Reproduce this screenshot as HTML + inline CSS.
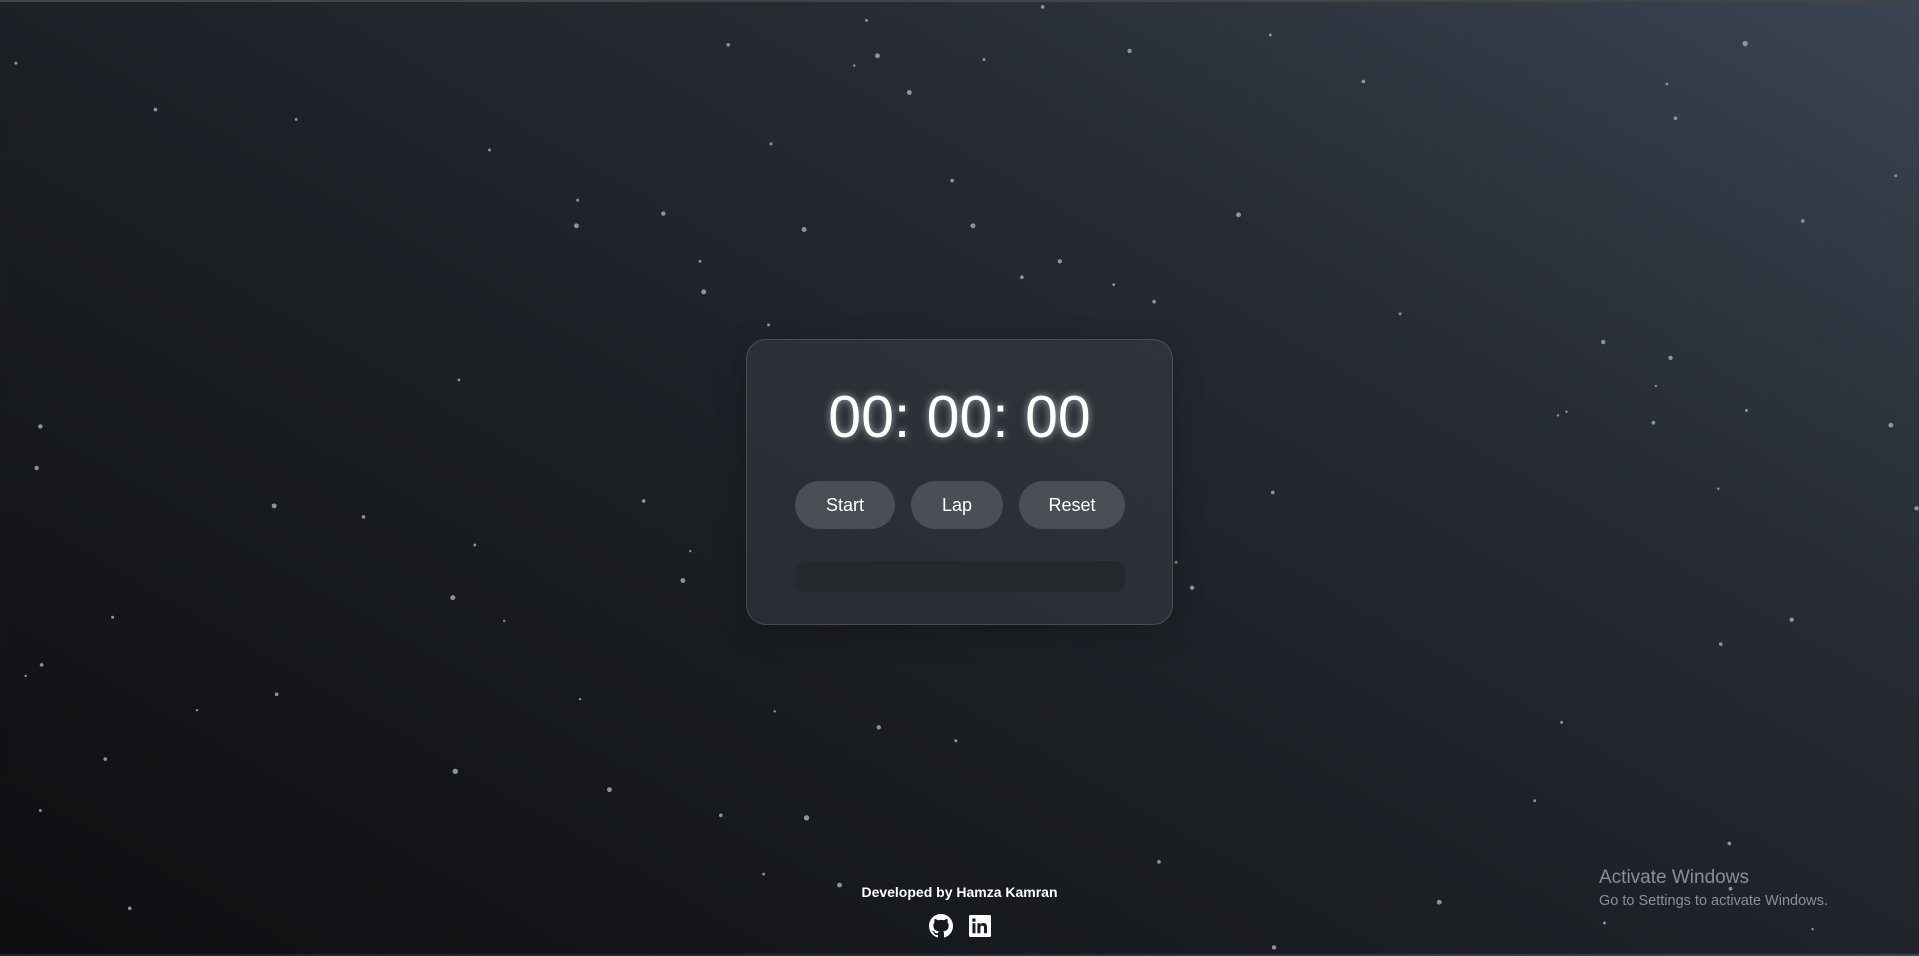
<!DOCTYPE html>
<html><head><meta charset="utf-8"><style>
html,body{margin:0;padding:0;width:1919px;height:954px;overflow:hidden}
body{background:linear-gradient(30deg,#0d0e10 0%,#1b1e23 40%,#272c34 70%,#3b4452 100%);font-family:"Liberation Sans",sans-serif;position:relative;border-top:2px solid #444}
svg.stars{position:absolute;left:0;top:0;width:1919px;height:954px}
.card{position:absolute;left:746px;top:337px;width:425px;height:284px;border:1px solid rgba(255,255,255,.14);border-radius:20px;background:rgba(66,72,80,.38);box-shadow:0 8px 30px rgba(0,0,0,.25)}
.time{position:absolute;left:0;width:100%;top:386px;text-align:center;color:#fff;font-size:59px;line-height:1;text-shadow:0 0 8px rgba(255,255,255,.6)}
.btn{position:absolute;top:479px;height:48px;border-radius:24px;background:#4a4e55;color:#fff;font-size:18px;line-height:48px;text-align:center}
.laps{position:absolute;left:795px;top:559px;width:330px;height:31px;border-radius:9px;background:#25282d}
.foot{position:absolute;left:0;width:1919px;top:882px;text-align:center;color:#fff;font-size:14px;font-weight:600}
.win1{position:absolute;left:1599px;top:865px;color:#8b8f95;font-size:19px}
.win2{position:absolute;left:1599px;top:891px;color:#8b8f95;font-size:14.5px}
</style></head><body>
<svg class="stars" viewBox="0 0 1568 780" preserveAspectRatio="none" fill="#8e9299">
<circle cx="13" cy="50" r="1.2"/><circle cx="127" cy="88" r="1.5"/><circle cx="242" cy="96" r="1.2"/><circle cx="400" cy="121" r="1.2"/><circle cx="472" cy="162" r="1.2"/><circle cx="471" cy="183" r="2"/><circle cx="542" cy="173" r="1.8"/><circle cx="595" cy="35" r="1.5"/><circle cx="708" cy="15" r="1.2"/><circle cx="717" cy="44" r="2"/><circle cx="698" cy="52" r="1"/><circle cx="743" cy="74" r="2"/><circle cx="804" cy="47" r="1.2"/><circle cx="852" cy="4" r="1.5"/><circle cx="923" cy="40" r="1.8"/><circle cx="1038" cy="27" r="1.2"/><circle cx="1114" cy="65" r="1.5"/><circle cx="630" cy="116" r="1.2"/><circle cx="657" cy="186" r="2"/><circle cx="778" cy="146" r="1.5"/><circle cx="795" cy="183" r="2"/><circle cx="572" cy="212" r="1.2"/><circle cx="575" cy="237" r="2"/><circle cx="628" cy="264" r="1.2"/><circle cx="835" cy="225" r="1.5"/><circle cx="866" cy="212" r="1.8"/><circle cx="910" cy="231" r="1.2"/><circle cx="943" cy="245" r="1.5"/><circle cx="1012" cy="174" r="2"/><circle cx="1144" cy="255" r="1.2"/><circle cx="1426" cy="34" r="2.2"/><circle cx="1362" cy="67" r="1.2"/><circle cx="1369" cy="95" r="1.5"/><circle cx="1473" cy="179" r="1.5"/><circle cx="1549" cy="142" r="1.2"/><circle cx="1310" cy="278" r="1.8"/><circle cx="1365" cy="291" r="1.8"/><circle cx="1353" cy="314" r="1"/><circle cx="1273" cy="338" r="1"/><circle cx="1280" cy="335" r="1"/><circle cx="1351" cy="344" r="1.5"/><circle cx="1427" cy="334" r="1.2"/><circle cx="1545" cy="346" r="2"/><circle cx="1404" cy="398" r="1"/><circle cx="1566" cy="414" r="1.8"/><circle cx="1040" cy="401" r="1.5"/><circle cx="961" cy="458" r="1.2"/><circle cx="974" cy="479" r="1.8"/><circle cx="1406" cy="525" r="1.5"/><circle cx="1464" cy="505" r="1.8"/><circle cx="1276" cy="589" r="1.2"/><circle cx="1254" cy="653" r="1.2"/><circle cx="1413" cy="688" r="1.5"/><circle cx="1414" cy="725" r="1.5"/><circle cx="1481" cy="758" r="1"/><circle cx="1311" cy="753" r="1.2"/><circle cx="1176" cy="736" r="2"/><circle cx="1041" cy="773" r="1.8"/><circle cx="947" cy="703" r="1.5"/><circle cx="375" cy="309" r="1.2"/><circle cx="33" cy="347" r="1.8"/><circle cx="30" cy="381" r="1.8"/><circle cx="224" cy="412" r="2"/><circle cx="297" cy="421" r="1.5"/><circle cx="388" cy="444" r="1.2"/><circle cx="526" cy="408" r="1.5"/><circle cx="564" cy="449" r="1"/><circle cx="558" cy="473" r="2"/><circle cx="370" cy="487" r="2"/><circle cx="412" cy="506" r="1"/><circle cx="92" cy="503" r="1.2"/><circle cx="34" cy="542" r="1.5"/><circle cx="21" cy="551" r="1"/><circle cx="226" cy="566" r="1.5"/><circle cx="161" cy="579" r="1"/><circle cx="474" cy="570" r="1"/><circle cx="633" cy="580" r="1"/><circle cx="718" cy="593" r="1.8"/><circle cx="781" cy="604" r="1.2"/><circle cx="86" cy="619" r="1.5"/><circle cx="372" cy="629" r="2.2"/><circle cx="498" cy="644" r="2"/><circle cx="589" cy="665" r="1.5"/><circle cx="659" cy="667" r="2.2"/><circle cx="33" cy="661" r="1.2"/><circle cx="624" cy="713" r="1.2"/><circle cx="686" cy="722" r="2"/><circle cx="106" cy="741" r="1.5"/>
</svg>
<div class="card"></div>
<div class="time">00: 00: 00</div>
<div class="btn" style="left:795px;width:100px">Start</div>
<div class="btn" style="left:911px;width:92px">Lap</div>
<div class="btn" style="left:1019px;width:106px">Reset</div>
<div class="laps"></div>
<div class="foot">Developed by Hamza Kamran</div>
<svg style="position:absolute;left:929px;top:912px" width="24" height="24" viewBox="0 0 16 16" fill="#fff"><path d="M8 0C3.58 0 0 3.58 0 8c0 3.540 2.290 6.530 5.470 7.590.4.07.55-.17.55-.38v-1.33c-2.230.48-2.700-1.070-2.700-1.070-.36-.92-.89-1.170-.89-1.170-.73-.5.05-.49.05-.49.8.06 1.230.83 1.230.83.71 1.220 1.870.87 2.330.66.07-.52.28-.87.51-1.070-1.780-.2-3.640-.89-3.640-3.950 0-.87.31-1.590.82-2.150-.08-.2-.36-1.020.08-2.120 0 0 .67-.21 2.200.82a7.600 7.600 0 0 1 4 0c1.530-1.040 2.200-.82 2.200-.82.44 1.100.16 1.920.08 2.120.51.56.82 1.270.82 2.150 0 3.070-1.870 3.750-3.650 3.950.29.25.54.73.54 1.480v2.200c0 .21.15.46.55.38A8 8 0 0 0 16 8c0-4.420-3.580-8-8-8z"/></svg>
<svg style="position:absolute;left:969px;top:913px" width="22" height="22" viewBox="0 0 16 16"><rect width="16" height="16" rx="1" fill="#fff"/><path fill="#1b1e23" d="M2.5 6h2.2v7.3H2.5zM3.6 2.4a1.3 1.3 0 1 1 0 2.6 1.3 1.3 0 0 1 0-2.6zM6.1 6h2.1v1c.3-.6 1-1.2 2.2-1.2 2.3 0 2.7 1.5 2.7 3.4v4.1h-2.2V9.7c0-.9 0-2-1.2-2s-1.4.9-1.4 1.9v3.7H6.1z"/></svg>
<div class="win1">Activate Windows</div>
<div class="win2">Go to Settings to activate Windows.</div>
</body></html>
